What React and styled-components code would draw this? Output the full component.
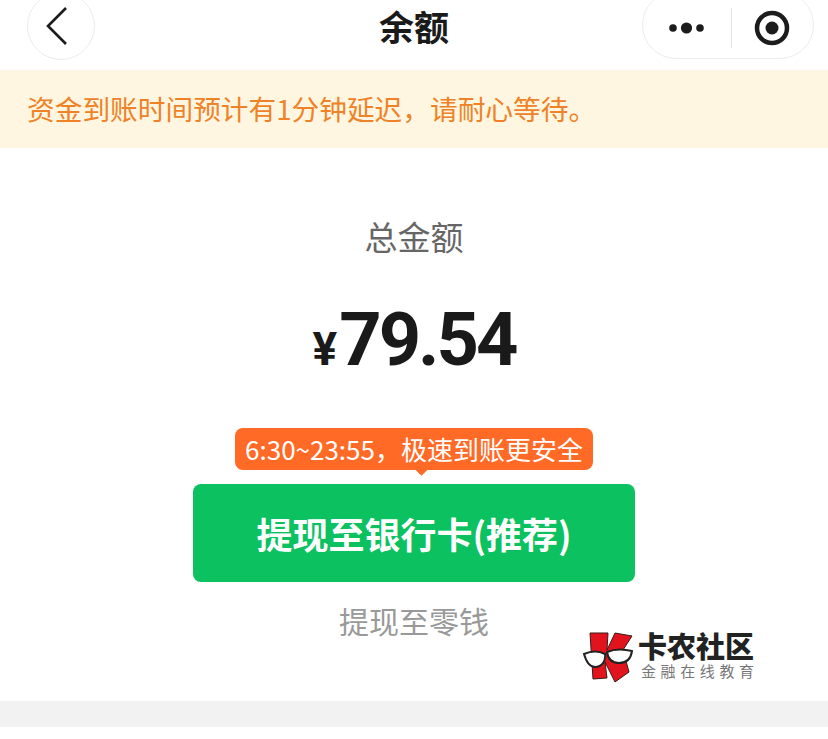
import React from "react";
import styled, { createGlobalStyle } from "styled-components";

const GlobalStyle = createGlobalStyle`
  html, body {
    margin: 0;
    padding: 0;
    background: #fff;
  }
  body {
    font-family: "Noto Sans CJK SC", "Noto Sans", sans-serif;
  }
`;

const Page = styled.div`
  width: 828px;
  height: 739px;
  overflow: hidden;
  background: #fff;
  display: flex;
  flex-direction: column;
`;

const NavBar = styled.div`
  height: 70px;
  flex: none;
  display: grid;
  grid-template-columns: 1fr auto 1fr;
  align-items: end;
  align-content: end;
  padding: 0 14px 10px 14px;
  box-sizing: border-box;
  overflow: hidden;
`;

const BackCircle = styled.div`
  width: 68px;
  height: 68px;
  margin-left: 13px;
  box-sizing: border-box;
  border: 1px solid #ececec;
  border-radius: 50%;
  display: flex;
  align-items: center;
  justify-content: center;
  padding-right: 8px;
`;

const Title = styled.div`
  font-size: 35px;
  font-weight: 700;
  line-height: 56px;
  color: #1a1a1a;
  margin-bottom: 6px;
`;

const Capsule = styled.div`
  justify-self: end;
  width: 172px;
  height: 68px;
  margin-bottom: 1px;
  box-sizing: border-box;
  border: 1px solid #ececec;
  border-radius: 34px;
  display: flex;
  align-items: center;
  padding: 6px 0 0 24px;
`;

const CapsuleLine = styled.div`
  width: 1px;
  height: 40px;
  background: #e2e2e2;
  margin: 0 22px 0 24px;
`;

const Notice = styled.div`
  height: 78px;
  flex: none;
  box-sizing: border-box;
  background: #fef6e0;
  color: #ef8227;
  font-size: 27.7px;
  display: flex;
  align-items: center;
  padding: 0 0 2px 27px;
`;

const Content = styled.div`
  position: relative;
  flex: none;
  height: 553px;
  display: flex;
  flex-direction: column;
  align-items: center;
`;

const AmountLabel = styled.div`
  margin-top: 66px;
  font-size: 33px;
  line-height: 44px;
  color: #666;
`;

const Amount = styled.div`
  margin-top: 40px;
  display: flex;
  align-items: baseline;
  color: #1a1a1a;
  font-family: "Roboto", "Liberation Sans", sans-serif;
  font-weight: 700;
  line-height: 84px;
`;

const Currency = styled.span`
  font-size: 46px;
  margin-right: 2px;
`;

const Digits = styled.span`
  font-size: 74px;
  letter-spacing: -3px;
`;

const Tip = styled.div`
  position: relative;
  margin-top: 37px;
  width: 358px;
  height: 42px;
  border-radius: 8px;
  background: #ff6a26;
  color: #fff;
  font-size: 26px;
  line-height: 42px;
  text-align: center;
  white-space: nowrap;

  &::after {
    content: "";
    position: absolute;
    left: 182px;
    bottom: -4px;
    width: 9px;
    height: 9px;
    background: #ff6a26;
    transform: rotate(45deg);
  }
`;

const PrimaryButton = styled.div`
  margin-top: 14px;
  width: 442px;
  height: 98px;
  border-radius: 8px;
  background: #0cc160;
  color: #fff;
  font-size: 36px;
  font-weight: 700;
  display: flex;
  align-items: center;
  justify-content: center;
`;

const SecondaryLink = styled.div`
  margin-top: 16px;
  font-size: 30px;
  line-height: 44px;
  color: #999;
`;

const Watermark = styled.div`
  position: absolute;
  left: 583px;
  top: 484px;
  display: flex;
  align-items: flex-start;
`;

const WatermarkText = styled.div`
  margin: -2px 0 0 5px;
  display: flex;
  flex-direction: column;
`;

const WatermarkName = styled.div`
  font-size: 29px;
  line-height: 30px;
  font-weight: 900;
  color: #222;
  white-space: nowrap;
`;

const WatermarkSlogan = styled.div`
  margin: 1px 0 0 3px;
  font-size: 15px;
  line-height: 20px;
  letter-spacing: 4.6px;
  color: #777;
  white-space: nowrap;
`;

const FooterBand = styled.div`
  height: 26px;
  flex: none;
  background: #f2f2f2;
`;

function KLogo() {
  return (
    <svg width="50" height="52" viewBox="0 0 50 52">
      <path d="M7 1 L25 1 L24 18 L32 1 L49 4 L40 18 L46 40 L32 50 L22 30 L24 46 L10 47 Z" fill="#e1141d" stroke="#3a1a1a" strokeWidth="1" strokeLinejoin="round" />
      <path d="M1 22 C8 19 16 19 22 22 C23 29 19 35 12 35 C6 35 3 29 1 22 Z" fill="#fff" stroke="#222" strokeWidth="2" />
      <path d="M24 20 C31 17 41 17 49 19 C48 26 44 31 36 31 C29 31 25 27 24 20 Z" fill="#fff" stroke="#222" strokeWidth="2" />
    </svg>
  );
}

function App() {
  return (
    <Page>
      <GlobalStyle />
      <NavBar>
        <BackCircle>
          <svg width="24" height="40" viewBox="0 0 24 40">
            <path d="M21 2 L3 20 L21 38" fill="none" stroke="#1c1c1c" strokeWidth="2.6" />
          </svg>
        </BackCircle>
        <Title>余额</Title>
        <Capsule>
          <svg width="40" height="16" viewBox="0 0 40 16">
            <circle cx="6" cy="8" r="3.8" fill="#1c1c1c" />
            <circle cx="19.5" cy="8" r="5.6" fill="#1c1c1c" />
            <circle cx="33" cy="8" r="3.8" fill="#1c1c1c" />
          </svg>
          <CapsuleLine />
          <svg width="36" height="36" viewBox="0 0 36 36">
            <circle cx="18" cy="18" r="15" fill="none" stroke="#1c1c1c" strokeWidth="4.5" />
            <circle cx="18" cy="18" r="6.5" fill="#1c1c1c" />
          </svg>
        </Capsule>
      </NavBar>
      <Notice>资金到账时间预计有1分钟延迟，请耐心等待。</Notice>
      <Content>
        <AmountLabel>总金额</AmountLabel>
        <Amount>
          <Currency>¥</Currency>
          <Digits>79.54</Digits>
        </Amount>
        <Tip>6:30~23:55，极速到账更安全</Tip>
        <PrimaryButton>提现至银行卡(推荐)</PrimaryButton>
        <SecondaryLink>提现至零钱</SecondaryLink>
        <Watermark>
          <KLogo />
          <WatermarkText>
            <WatermarkName>卡农社区</WatermarkName>
            <WatermarkSlogan>金融在线教育</WatermarkSlogan>
          </WatermarkText>
        </Watermark>
      </Content>
      <FooterBand />
    </Page>
  );
}

export default App;
